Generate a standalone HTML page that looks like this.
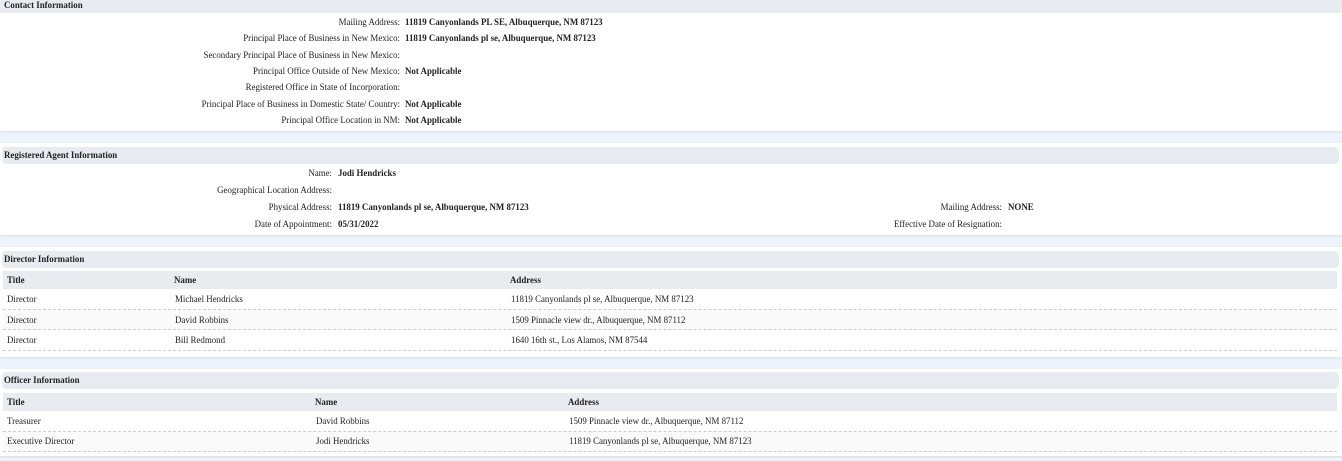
<!DOCTYPE html>
<html><head><meta charset="utf-8"><style>
*{margin:0;padding:0;box-sizing:border-box}
body{width:1342px;height:461px;background:#eef2fa;font-family:"Liberation Serif",serif;font-size:8.9px;color:#222;position:relative;overflow:hidden}
.w{position:absolute;left:0;width:1342px;background:#fff;box-shadow:0 1px 2px #d8dce4}
.h{position:absolute;left:2px;width:1337px;background:#e8ebf0;border-radius:4px;font-weight:bold;padding-left:2px}
.th{position:absolute;left:3px;width:1334px;background:#e8ebf0;font-weight:bold}
.t{position:absolute;white-space:nowrap;line-height:10px}
.r{text-align:right}
.b{font-weight:bold}
.row{position:absolute;left:3px;width:1334px;border-bottom:1px dashed #ccc}
</style></head><body>
<div class="w" style="top:0;height:131px"></div>
<div class="h" style="top:0;left:0;width:1342px;height:13px;line-height:11px;border-radius:0 0 4px 0;padding-left:4px">Contact Information</div>
<div class="t r" style="right:942px;top:17px">Mailing Address:</div><div class="t b" style="left:405px;top:17px">11819 Canyonlands PL SE, Albuquerque, NM 87123</div>
<div class="t r" style="right:942px;top:33px">Principal Place of Business in New Mexico:</div><div class="t b" style="left:405px;top:33px">11819 Canyonlands pl se, Albuquerque, NM 87123</div>
<div class="t r" style="right:942px;top:50px">Secondary Principal Place of Business in New Mexico:</div>
<div class="t r" style="right:942px;top:66px">Principal Office Outside of New Mexico:</div><div class="t b" style="left:405px;top:66px">Not Applicable</div>
<div class="t r" style="right:942px;top:82px">Registered Office in State of Incorporation:</div>
<div class="t r" style="right:942px;top:99px">Principal Place of Business in Domestic State/ Country:</div><div class="t b" style="left:405px;top:99px">Not Applicable</div>
<div class="t r" style="right:942px;top:115px">Principal Office Location in NM:</div><div class="t b" style="left:405px;top:115px">Not Applicable</div>

<div class="w" style="top:143px;height:92px"></div>
<div class="h" style="top:147px;height:17px;line-height:17px">Registered Agent Information</div>
<div class="t r" style="right:1010px;top:168px">Name:</div><div class="t b" style="left:338px;top:168px">Jodi Hendricks</div>
<div class="t r" style="right:1010px;top:185px">Geographical Location Address:</div>
<div class="t r" style="right:1010px;top:202px">Physical Address:</div><div class="t b" style="left:338px;top:202px">11819 Canyonlands pl se, Albuquerque, NM 87123</div>
<div class="t r" style="right:340px;top:202px">Mailing Address:</div><div class="t b" style="left:1008px;top:202px">NONE</div>
<div class="t r" style="right:1010px;top:219px">Date of Appointment:</div><div class="t b" style="left:338px;top:219px">05/31/2022</div>
<div class="t r" style="right:340px;top:219px">Effective Date of Resignation:</div>

<div class="w" style="top:247px;height:110px"></div>
<div class="h" style="top:251px;height:17px;line-height:17px">Director Information</div>
<div class="th" style="top:271px;height:18px"></div>
<div class="t b" style="left:7px;top:275px">Title</div><div class="t b" style="left:174px;top:275px">Name</div><div class="t b" style="left:510px;top:275px">Address</div>
<div class="row" style="top:289px;height:21px;background:#fff"></div>
<div class="row" style="top:310px;height:20px;background:#fafafa"></div>
<div class="row" style="top:330px;height:21px;background:#fff"></div>
<div class="t" style="left:7px;top:294px">Director</div><div class="t" style="left:175px;top:294px">Michael Hendricks</div><div class="t" style="left:511px;top:294px">11819 Canyonlands pl se, Albuquerque, NM 87123</div>
<div class="t" style="left:7px;top:315px">Director</div><div class="t" style="left:175px;top:315px">David Robbins</div><div class="t" style="left:511px;top:315px">1509 Pinnacle view dr., Albuquerque, NM 87112</div>
<div class="t" style="left:7px;top:335px">Director</div><div class="t" style="left:175px;top:335px">Bill Redmond</div><div class="t" style="left:511px;top:335px">1640 16th st., Los Alamos, NM 87544</div>

<div class="w" style="top:369px;height:87px"></div>
<div class="h" style="top:372px;height:17px;line-height:17px">Officer Information</div>
<div class="th" style="top:393px;height:18px"></div>
<div class="t b" style="left:7px;top:397px">Title</div><div class="t b" style="left:315px;top:397px">Name</div><div class="t b" style="left:568px;top:397px">Address</div>
<div class="row" style="top:411px;height:21px;background:#fff"></div>
<div class="row" style="top:432px;height:20px;background:#fafafa"></div>
<div class="t" style="left:7px;top:416px">Treasurer</div><div class="t" style="left:316px;top:416px">David Robbins</div><div class="t" style="left:569px;top:416px">1509 Pinnacle view dr., Albuquerque, NM 87112</div>
<div class="t" style="left:7px;top:436px">Executive Director</div><div class="t" style="left:316px;top:436px">Jodi Hendricks</div><div class="t" style="left:569px;top:436px">11819 Canyonlands pl se, Albuquerque, NM 87123</div>
</body></html>
